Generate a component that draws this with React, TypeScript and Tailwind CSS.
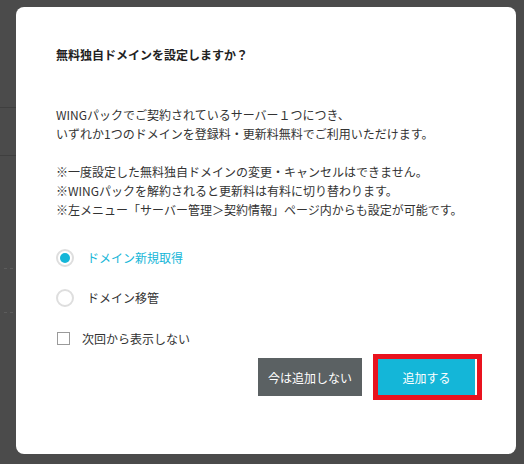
export default function App() {
  return (
    <div className="relative h-[464px] w-[524px] overflow-hidden bg-[#4b4b4b] font-['Noto_Sans_CJK_JP','Noto_Sans',sans-serif]">
      {/* page behind the overlay */}
      <div className="flex w-4 flex-col" aria-hidden>
        <div className="h-[107px]" />
        <div className="h-px bg-[#3f3f3f]" />
        <div className="h-[47px]" />
        <div className="h-px bg-[#3f3f3f]" />
        <div className="h-[112px]" />
        <div className="flex gap-[3px] pl-1">
          <div className="h-px w-[3px] bg-[#5c5c5c]" />
          <div className="h-px w-[3px] bg-[#5c5c5c]" />
        </div>
        <div className="h-[43px]" />
        <div className="flex gap-[3px] pl-1">
          <div className="h-px w-[3px] bg-[#5c5c5c]" />
          <div className="h-px w-[3px] bg-[#5c5c5c]" />
        </div>
      </div>

      {/* dialog */}
      <div className="absolute left-4 top-[7px] flex h-[447px] w-[500px] flex-col rounded-lg bg-white pl-10 pr-[34px] pt-[38px] text-[12px] leading-[19px] text-[#333]">
        <h2 className="font-bold text-[#222]">無料独自ドメインを設定しますか？</h2>

        <div className="mt-[41px]">
          <p>WINGパックでご契約されているサーバー１つにつき、</p>
          <p>いずれか1つのドメインを登録料・更新料無料でご利用いただけます。</p>
          <p className="mt-[19px]">※一度設定した無料独自ドメインの変更・キャンセルはできません。</p>
          <p>※WINGパックを解約されると更新料は有料に切り替わります。</p>
          <p>※左メニュー「サーバー管理＞契約情報」ページ内からも設定が可能です。</p>
        </div>

        <div className="mt-[29px] flex flex-col gap-[21px]">
          <label className="flex items-center gap-[13px] text-[#14b6d8]">
            <span className="flex h-[18px] w-[18px] items-center justify-center rounded-full border-2 border-[#dedede]">
              <span className="h-[10px] w-[10px] rounded-full bg-[#14b6d8]" />
            </span>
            ドメイン新規取得
          </label>
          <label className="flex items-center gap-[13px]">
            <span className="h-[18px] w-[18px] rounded-full border-2 border-[#dedede]" />
            ドメイン移管
          </label>
        </div>

        <label className="mt-[22px] flex items-center gap-[12px]">
          <span className="ml-px h-[13px] w-[13px] border border-[#9a9a9a]" />
          次回から表示しない
        </label>

        <div className="mt-[6px] flex items-center justify-end gap-[11px]">
          <button className="h-[38px] w-[104px] bg-[#5b6163] text-white">今は追加しない</button>
          <div className="border-[5px] border-[#e9131e]">
            <button className="h-[36px] w-[99px] border-r-[2px] border-white bg-[#14b6d8] text-white">
              追加する
            </button>
          </div>
        </div>
      </div>
    </div>
  );
}
